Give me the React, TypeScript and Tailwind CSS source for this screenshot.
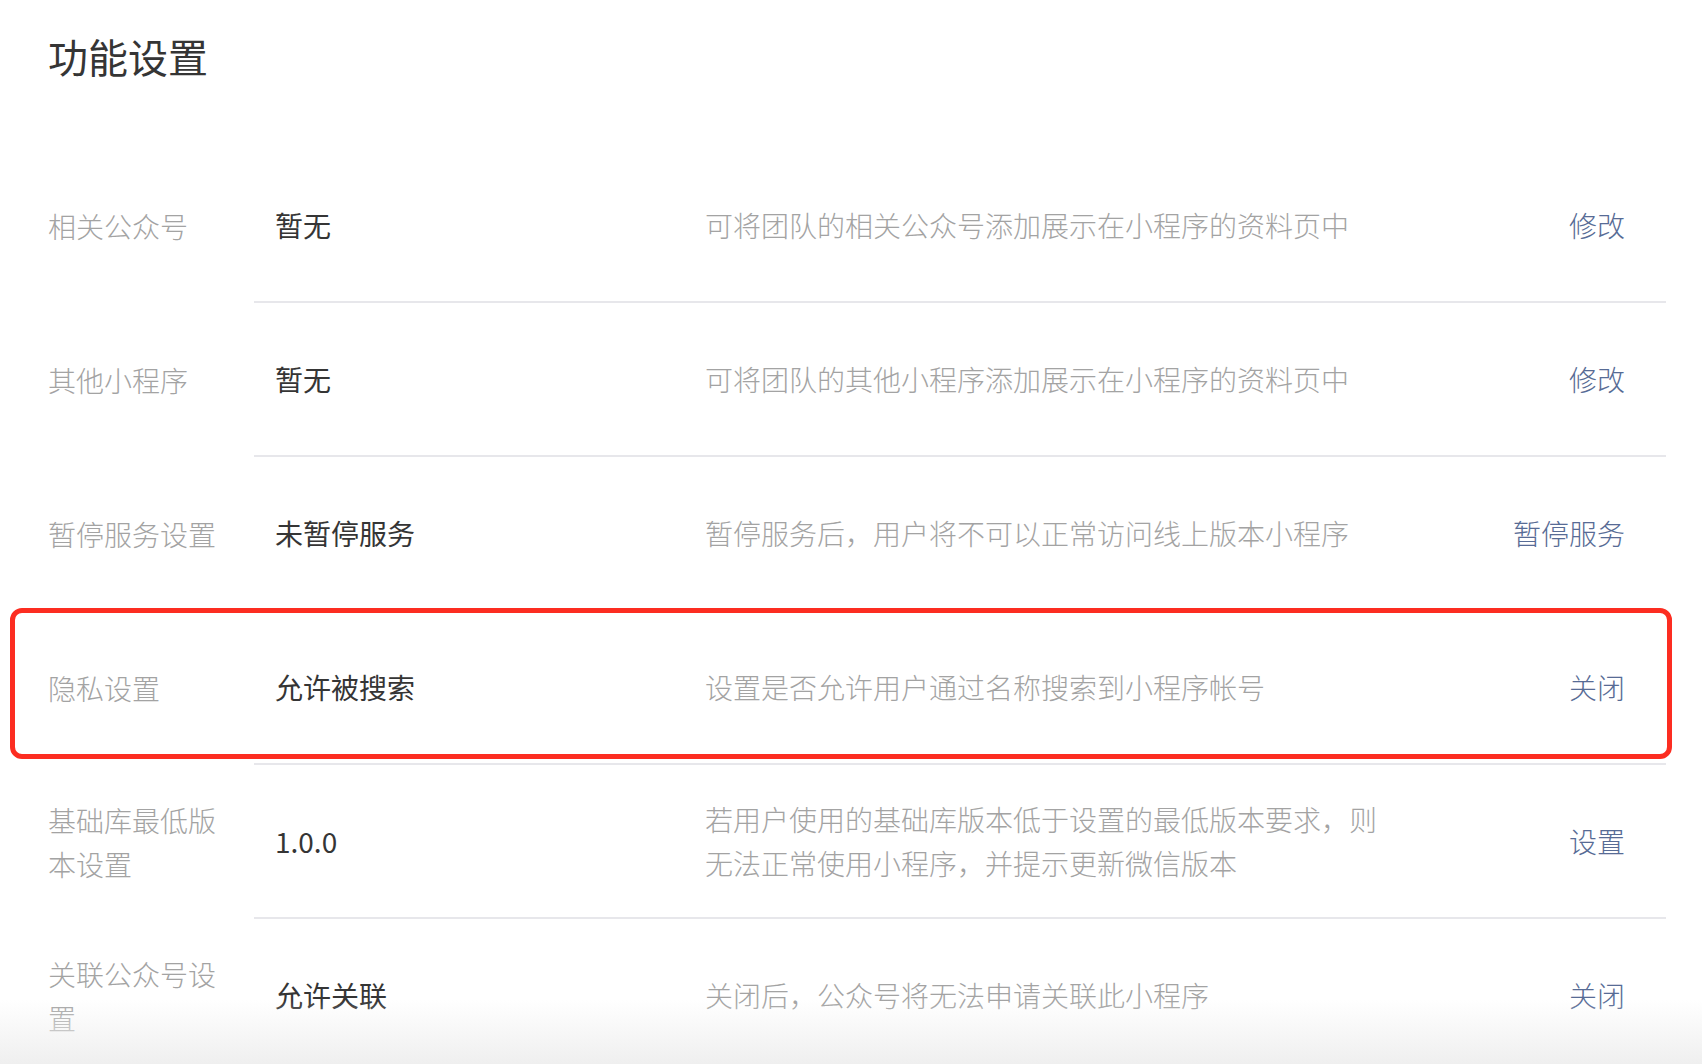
import React from "react";

type Row = {
  label: string;
  value: string;
  desc: string;
  action: string;
  highlight?: boolean;
};

const rows: Row[] = [
  { label: "相关公众号", value: "暂无", desc: "可将团队的相关公众号添加展示在小程序的资料页中", action: "修改" },
  { label: "其他小程序", value: "暂无", desc: "可将团队的其他小程序添加展示在小程序的资料页中", action: "修改" },
  { label: "暂停服务设置", value: "未暂停服务", desc: "暂停服务后，用户将不可以正常访问线上版本小程序", action: "暂停服务" },
  { label: "隐私设置", value: "允许被搜索", desc: "设置是否允许用户通过名称搜索到小程序帐号", action: "关闭", highlight: true },
  { label: "基础库最低版本设置", value: "1.0.0", desc: "若用户使用的基础库版本低于设置的最低版本要求，则无法正常使用小程序，并提示更新微信版本", action: "设置" },
  { label: "关联公众号设置", value: "允许关联", desc: "关闭后，公众号将无法申请关联此小程序", action: "关闭" },
];

export default function App() {
  return (
    <div
      className="relative w-[1702px] h-[1064px] overflow-hidden bg-white"
      style={{ fontFamily: '"Noto Sans CJK SC", "Noto Sans", sans-serif' }}
    >
      <div className="pl-[48px] pr-[36px] pt-[28px]">
        <h1 className="text-[40px] leading-[56px] text-[#353535] font-normal">功能设置</h1>
        <div className="mt-[65px] flex flex-col">
          {rows.map((r) => (
            <div key={r.label} className="relative flex h-[154px]">
              <div className="w-[206px] pr-[26px] flex items-center text-[28px] leading-[44px] text-[#a3a3a3] font-light">
                <span>{r.label}</span>
              </div>
              <div className="flex-1 flex items-center border-b-2 border-[#e7e7eb] pl-[21px] pr-[41px]">
                <div className="w-[430px] text-[28px] leading-[44px] text-[#353535] font-normal">{r.value}</div>
                <div className="w-[690px] text-[28px] leading-[44px] text-[#a3a3a3] font-light">{r.desc}</div>
                <div className="flex-1 text-right text-[28px] leading-[44px] text-[#576b95] font-light">{r.action}</div>
              </div>
              {r.highlight && (
                <div className="absolute left-[-38px] right-[-6px] top-[-3px] bottom-[6px] border-[5px] border-[#fc2d21] rounded-[12px] pointer-events-none" />
              )}
            </div>
          ))}
        </div>
      </div>
      <div className="absolute left-0 right-0 bottom-0 h-[64px] bg-gradient-to-b from-white/0 to-[#efefef] pointer-events-none" />
    </div>
  );
}
